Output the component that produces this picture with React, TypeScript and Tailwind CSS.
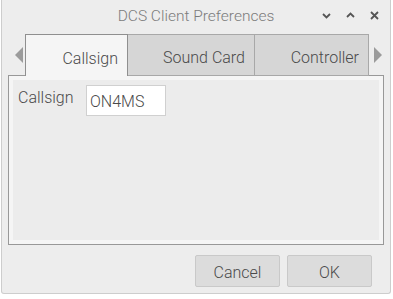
import React from "react";

const tabs = [
  { name: "Callsign", width: "w-[103px]", active: true },
  { name: "Sound Card", width: "w-[127px]", active: false },
  { name: "Controller", width: "w-[114px]", active: false },
];

function TitleIcon({ kind }: { kind: "down" | "up" | "close" }) {
  return (
    <svg width="9" height="9" viewBox="0 0 9 9" className="text-[#555555]">
      {kind === "down" && <path d="M1 3 L4.5 6.5 L8 3" fill="none" stroke="currentColor" strokeWidth="1.8" />}
      {kind === "up" && <path d="M1 6 L4.5 2.5 L8 6" fill="none" stroke="currentColor" strokeWidth="1.8" />}
      {kind === "close" && <path d="M1 1 L8 8 M8 1 L1 8" fill="none" stroke="currentColor" strokeWidth="1.8" />}
    </svg>
  );
}

export default function App() {
  return (
    <div className="w-[393px] h-[299px] bg-white overflow-hidden font-['Roboto',sans-serif] font-light text-[#4a4a4a]">
      <div className="ml-px w-[390px] h-[294px] bg-[#ededed] border-x border-b border-[#cdcdcd] rounded-b-[3px] flex flex-col">
        {/* title bar */}
        <div className="h-[34px] flex items-center relative">
          <div className="flex-1 text-center text-[15.5px] text-[#7c7c7c] pb-[1px]">DCS Client Preferences</div>
          <div className="absolute right-[11px] top-[11px] flex items-center gap-[15px]">
            <TitleIcon kind="down" />
            <TitleIcon kind="up" />
            <TitleIcon kind="close" />
          </div>
        </div>

        {/* tabs */}
        <div className="h-[42px] flex items-stretch relative z-10 -mb-px">
          <div className="w-[23px] flex items-center justify-end pr-[2px]">
            <div className="w-0 h-0 border-y-[8px] border-y-transparent border-r-[8px] border-r-[#9b9b9b]" />
          </div>
          {tabs.map((t, i) => (
            <div
              key={t.name}
              className={`${t.width} flex items-center justify-end pr-[9px] pt-[6px] text-[16px] border-t border-r ${i === 0 ? "border-l" : ""} ${
                t.active ? "bg-[#f5f5f5] border-[#8f8f8f]" : "bg-[#d6d6d6] border-[#a8a8a8] border-b"
              }`}
            >
              {t.name}
            </div>
          ))}
          <div className="flex items-center pl-[5px]">
            <div className="w-0 h-0 border-y-[8px] border-y-transparent border-l-[8px] border-l-[#9b9b9b]" />
          </div>
        </div>

        {/* pane */}
        <div className="ml-[6px] w-[376px] h-[170px] border border-[#989898] bg-[#f5f5f5] p-[4px]">
          <div className="h-full bg-[#ececec] flex items-start pt-[5px] pl-[5px]">
            <div className="text-[16px] mt-[1px] w-[68px]">Callsign</div>
            <div className="w-[80px] h-[31px] bg-white border border-[#d0d0d0] flex items-center pl-[3px] pt-[3px] text-[16px]">
              ON4MS
            </div>
          </div>
        </div>

        {/* buttons */}
        <div className="flex justify-end gap-[7px] pr-[18px] mt-[10px]">
          <button className="w-[85px] h-[32px] bg-[#dcdcdc] border border-[#c9c9c9] rounded-[2px] pt-[3px] text-[16px] text-[#4a4a4a]">
            Cancel
          </button>
          <button className="w-[85px] h-[32px] bg-[#dcdcdc] border border-[#c9c9c9] rounded-[2px] pt-[3px] text-[16px] text-[#4a4a4a]">
            OK
          </button>
        </div>
      </div>
    </div>
  );
}
